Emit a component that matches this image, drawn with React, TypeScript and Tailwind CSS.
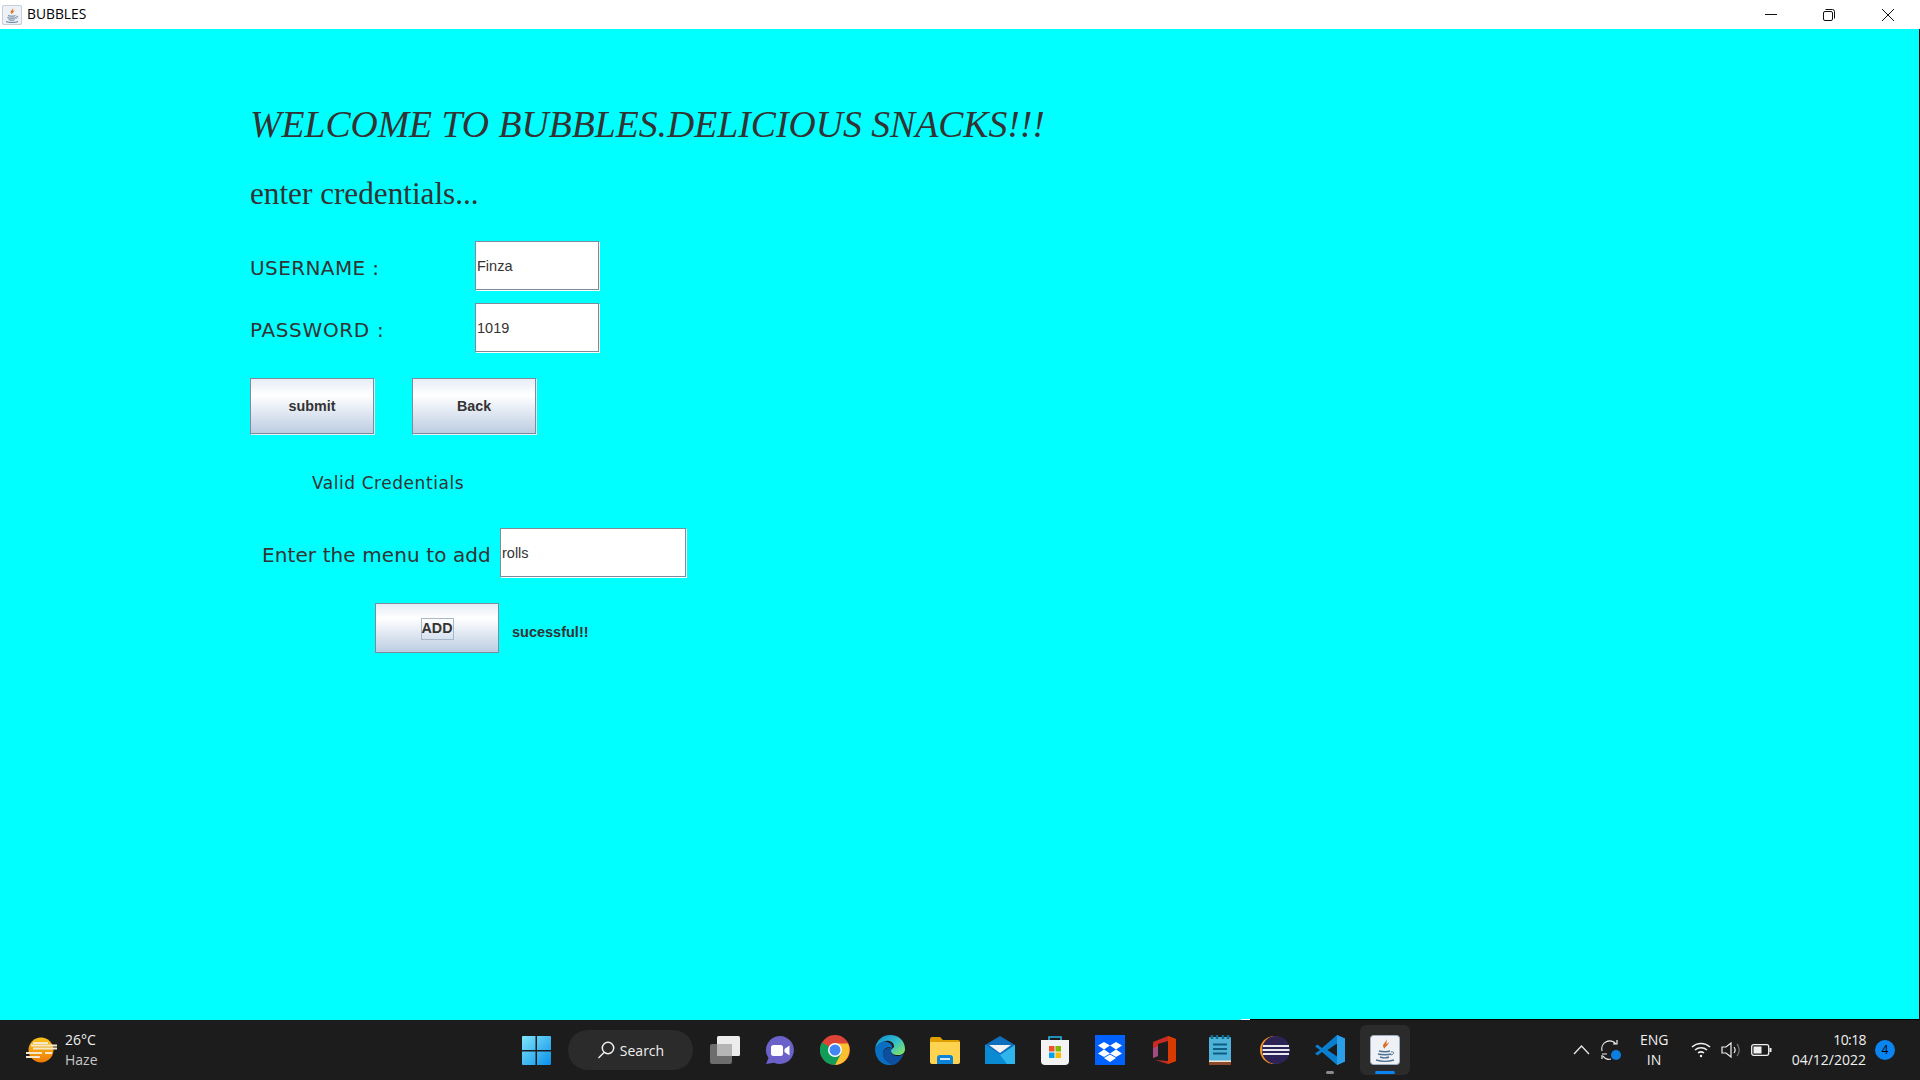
const SERIF = "font-['Liberation_Serif',serif]";
const TAHOMA = "font-['DejaVu_Sans',sans-serif]";

function JavaIcon({ size }: { size: number }) {
  return (
    <svg width={size} height={size} viewBox="0 0 30 30">
      <rect x="0.5" y="0.5" width="29" height="29" rx="3" fill="#eef1f5" stroke="#9fb0c4" />
      <path d="M16 3c2 3-3 5-3 8 0 1 1 2 2 3-1-2 4-4 4-7-1 1-2 2-3 2 1-2 1-4 0-6z" fill="#d9702a" />
      <path d="M9 16c3 1 9 1 11 0M8 19c3 1 11 1 13 0M10 22c3 1 7 1 9 0" fill="none" stroke="#4d7190" strokeWidth="1.4" />
      <path d="M21 17c3-1 4 2 0 3" fill="none" stroke="#4d7190" />
      <path d="M6 25c5 1.500 13 1.500 18 0" fill="none" stroke="#4d7190" strokeWidth="1.4" />
    </svg>
  );
}

function Win11() {
  return (
    <svg width="29" height="29" viewBox="0 0 29 29">
      <defs>
        <linearGradient id="w" x1="0" y1="0" x2="1" y2="1">
          <stop offset="0" stopColor="#7fe6fb" />
          <stop offset="1" stopColor="#0a8fe8" />
        </linearGradient>
      </defs>
      <path d="M1 0h12.500v14H0V1a1 1 0 0 1 1-1zM15 0h13a1 1 0 0 1 1 1v13H15zM0 15.500h13.500V29H1a1 1 0 0 1-1-1zM15 15.500h14V28a1 1 0 0 1-1 1H15z" fill="url(#w)" />
    </svg>
  );
}

function TaskView() {
  return (
    <svg width="30" height="28" viewBox="0 0 30 28">
      <rect x="0" y="8" width="22" height="20" rx="2" fill="#6d6d6d" />
      <rect x="7" y="0" width="23" height="20" rx="1.500" fill="#ececec" />
      <rect x="7" y="8" width="15" height="12" fill="#b5b5b5" />
    </svg>
  );
}

function Teams() {
  return (
    <svg width="30" height="30" viewBox="0 0 30 30">
      <path d="M15 1a14 14 0 1 1-6 26.700L1 29l2.500-6A14 14 0 0 1 15 1z" fill="#6a62c8" />
      <rect x="6" y="10" width="12" height="11" rx="2.500" fill="#fff" />
      <path d="M19.500 14l5-3.500v10l-5-3.500z" fill="#fff" />
    </svg>
  );
}

function Chrome() {
  return (
    <svg width="30" height="30" viewBox="0 0 30 30">
      <circle cx="15" cy="15" r="15" fill="#db4437" />
      <path d="M15 15L2 7.500A15 15 0 0 0 15 30l7.500-13z" fill="#0f9d58" />
      <path d="M15 8.500h13a15 15 0 0 1-13 21.500l7-13z" fill="#fbc02d" />
      <circle cx="15" cy="15" r="7" fill="#fff" />
      <circle cx="15" cy="15" r="5.500" fill="#4285f4" />
    </svg>
  );
}

function Edge() {
  return (
    <svg width="30" height="30" viewBox="0 0 30 30">
      <defs>
        <linearGradient id="eg" x1="0" y1="0" x2="1" y2="0.800">
          <stop offset="0" stopColor="#0a84d8" />
          <stop offset="0.600" stopColor="#35c1c8" />
          <stop offset="1" stopColor="#7ee06a" />
        </linearGradient>
      </defs>
      <path d="M15 0c9 0 15 6 15 14 0 4-3 6-7 6-5 0-7-2-7-4 0-3 3-2 3-5 0-3-4-6-8-5C5 7 1 11 0 14 1 6 7 0 15 0z" fill="url(#eg)" />
      <path d="M0 14c2-6 8-8 12-7 4 1 6 4 5 6-4-2-9 0-9 6 0 5 5 9 10 10-1 .5-2 1-4 1C6 30 0 23 0 14z" fill="#0a6fc2" />
      <path d="M8 19c0-5 5-7 9-6-1 1-1 2-1 3 0 3 3 5 7 5 3 0 5-1 6-3-2 7-8 12-11 12-5-1-10-6-10-11z" fill="#0d4f9e" />
    </svg>
  );
}

function Explorer() {
  return (
    <svg width="30" height="27" viewBox="0 0 30 27">
      <path d="M0 2a2 2 0 0 1 2-2h8l3 3h15a2 2 0 0 1 2 2v4H0z" fill="#e0a100" />
      <path d="M0 5h30v20a2 2 0 0 1-2 2H2a2 2 0 0 1-2-2z" fill="#fdd34f" />
      <path d="M7 27v-6a3 3 0 0 1 3-3h10a3 3 0 0 1 3 3v6z" fill="#0a84d8" />
      <rect x="10" y="21" width="10" height="2" fill="#fff" opacity="0.800" />
    </svg>
  );
}

function Mail() {
  return (
    <svg width="30" height="28" viewBox="0 0 30 28">
      <path d="M0 9L15 0l15 9v19H0z" fill="#0f6fbd" />
      <path d="M4 9h22L15 17z" fill="#f2f2f2" />
      <path d="M0 9l15 10L30 9v19H0z" fill="#2eb5ec" />
      <path d="M0 28V9l15 10 7 9z" fill="#0a8ad2" />
    </svg>
  );
}

function Store() {
  return (
    <svg width="30" height="30" viewBox="0 0 30 30">
      <path d="M9 6V2h12v4" fill="none" stroke="#27b5e8" strokeWidth="1.600" />
      <path d="M1 5h28v21a4 4 0 0 1-4 4H5a4 4 0 0 1-4-4z" fill="#f3f3f3" />
      <rect x="9" y="11" width="5.500" height="5.500" fill="#f0532b" />
      <rect x="15.500" y="11" width="5.500" height="5.500" fill="#7fba00" />
      <rect x="9" y="17.500" width="5.500" height="5.500" fill="#00a4ef" />
      <rect x="15.500" y="17.500" width="5.500" height="5.500" fill="#ffb900" />
    </svg>
  );
}

function Dropbox() {
  return (
    <svg width="30" height="30" viewBox="0 0 30 30">
      <rect width="30" height="30" fill="#0061fe" />
      <path d="M9 7l6 3.500-6 4-6-4zM21 7l6 3.500-6 4-6-4zM9 14.500l6 4-6 3.500-6-3.500zM21 14.500l6 4-6 3.500-6-3.500zM15 19.500l6 3.500-6 4-6-4z" fill="#fff" />
    </svg>
  );
}

function Office() {
  return (
    <svg width="24" height="28" viewBox="0 0 24 28">
      <path d="M0 6L15 0l8 3v22l-8 3-13-4 13 1V5L5 8v12L0 22z" fill="#c92a22" />
      <path d="M15 0l8 3v22l-8 3z" fill="#d83b01" />
      <path d="M0 22V12l5-2v10z" fill="#a34a7f" />
    </svg>
  );
}

function Notepad() {
  return (
    <svg width="22" height="30" viewBox="0 0 22 30">
      <rect y="2" width="22" height="28" rx="1" fill="#4fb3d9" />
      <rect y="27" width="22" height="3" fill="#8a4a2a" />
      <rect y="25.500" width="22" height="1.500" fill="#f0e6d8" />
      <path d="M3 0v4M8 0v4M14 0v4M19 0v4" stroke="#0f6f94" strokeWidth="2.500" />
      <path d="M4 9.500h14M4 14h14M4 18.500h14" stroke="#0d5f82" strokeWidth="2" />
    </svg>
  );
}

function Eclipse() {
  return (
    <svg width="30" height="30" viewBox="0 0 30 30">
      <circle cx="14" cy="15" r="14" fill="#f7941e" />
      <circle cx="16" cy="15" r="14" fill="#2c2255" />
      <path d="M3 11h26M2.500 15h27M3 19h26" stroke="#e8e8ef" strokeWidth="1.800" />
    </svg>
  );
}

function VSCode() {
  return (
    <svg width="30" height="30" viewBox="0 0 30 30">
      <path d="M22 0l8 3.500v23L22 30 7 17l-4.500 3.500L0 18.500 5 15 0 11.500 2.500 9.500 7 13z" fill="#0a7fd0" />
      <path d="M22 0l8 3.500v23L22 30z" fill="#2a9fe8" />
      <path d="M22 8.500L12.500 15 22 21.500z" fill="#1c1c1c" />
    </svg>
  );
}

function Sun() {
  return (
    <svg width="32" height="26" viewBox="0 0 32 26">
      <defs>
        <linearGradient id="s" x1="0" y1="0" x2="0" y2="1">
          <stop offset="0" stopColor="#fbc21a" />
          <stop offset="1" stopColor="#ee7a05" />
        </linearGradient>
      </defs>
      <circle cx="15" cy="13" r="12.500" fill="url(#s)" />
      <path d="M7 6h15M5 8.500h26M7 11.500h24M0 16h16M19 16h7M0 20h14" stroke="#f3e9c8" strokeWidth="2" />
    </svg>
  );
}

function Field({ value, className }: { value: string; className: string }) {
  return (
    <div className={`mb-px flex h-[49px] items-center border border-[#7d8b9b] bg-white pl-[1px] pt-[3px] font-['Liberation_Sans',sans-serif] text-[14.5px] text-[#333] shadow-[1px_1px_0_#fff] ${className}`}>
      {value}
    </div>
  );
}

function JavaButton({ children, className }: { children: React.ReactNode; className: string }) {
  return (
    <div className={`flex items-center justify-center border border-[#7d8b9b] bg-linear-to-b from-[#e6edf5] via-white via-30% to-[#bccde2] pt-[2px] font-['Liberation_Sans',sans-serif] text-[14.3px] font-bold text-[#333] ${className}`}>
      {children}
    </div>
  );
}

function Tray() {
  return (
    <div className="flex items-center text-white">
      <svg width="17" height="10" viewBox="0 0 17 10" fill="none" stroke="#e8e8e8" strokeWidth="1.300">
        <path d="M1 9l7.500-8L16 9" />
      </svg>
      <svg width="22" height="22" viewBox="0 0 22 22" fill="none" stroke="#f0f0f0" strokeWidth="1.200" className="ml-[10px]">
        <path d="M2 12a8 8 0 0 1 14-7M17 1v4h-4M2 15h5M2 20v-4" />
        <path d="M3 17c2 3 5 4 8 3" />
        <circle cx="16" cy="16" r="5" fill="#0a7fe0" stroke="none" />
      </svg>
      <div className="ml-[18px] w-[28px] text-center font-['Open_Sans',sans-serif] text-[14px] leading-[20px] text-[#f0f0f0]">
        ENG
        <br />
        IN
      </div>
      <svg width="20" height="16" viewBox="0 0 20 16" fill="none" stroke="#f0f0f0" strokeWidth="1.500" className="ml-[23px]">
        <path d="M1 5a13 13 0 0 1 18 0M4 8a9 9 0 0 1 12 0M7 11a5 5 0 0 1 6 0" />
        <circle cx="10" cy="14" r="1.200" fill="#f0f0f0" stroke="none" />
      </svg>
      <svg width="21" height="18" viewBox="0 0 21 18" fill="none" stroke="#f0f0f0" strokeWidth="1.200" className="ml-[10px]">
        <path d="M1 6h4l5-4v14l-5-4H1z" />
        <path d="M13 6c1.500 2 1.500 4 0 6" />
        <path d="M16 3c3 3.500 3 8.500 0 12" stroke="#777" />
      </svg>
      <svg width="21" height="12" viewBox="0 0 21 12" className="ml-[9px]">
        <rect x="0.700" y="0.700" width="17" height="10.600" rx="2" fill="none" stroke="#f0f0f0" strokeWidth="1.300" />
        <rect x="2.500" y="2.500" width="8" height="7" fill="#f0f0f0" />
        <rect x="18.500" y="4" width="2" height="4" fill="#f0f0f0" />
      </svg>
      <div className="ml-[18px] w-[76px] text-right font-['Open_Sans',sans-serif] text-[14px] leading-[20px] text-[#f0f0f0] whitespace-nowrap">
        <span className="tracking-[-0.6px]">10:18</span>
        <br />
        04/12/2022
      </div>
      <div className="ml-[9px] flex h-5 w-5 items-center justify-center rounded-full bg-[#0a84f0] font-['Open_Sans',sans-serif] text-[12px] text-black">
        4
      </div>
    </div>
  );
}

export default function App() {
  return (
    <div className="flex h-[1080px] w-[1920px] flex-col overflow-hidden bg-[#1c1c1c]">
      {/* title bar */}
      <div className="flex h-[29px] shrink-0 items-center bg-white">
        <div className="ml-[2px]">
          <JavaIcon size={20} />
        </div>
        <span className="ml-[5px] font-['Open_Sans',sans-serif] text-[13.8px] text-black">BUBBLES</span>
        <div className="ml-auto flex items-center">
          <svg width="12" height="12" viewBox="0 0 12 12" stroke="#111" strokeWidth="1" className="mr-[46px]">
            <path d="M0 5.500h12" />
          </svg>
          <svg width="12" height="12" viewBox="0 0 12 12" fill="none" stroke="#111" strokeWidth="1" className="mr-[47px]">
            <rect x="0.500" y="2.500" width="9" height="9" rx="1.500" />
            <path d="M2.500 .500h7a2 2 0 0 1 2 2v7" />
          </svg>
          <svg width="12" height="12" viewBox="0 0 12 12" stroke="#111" strokeWidth="1" className="mr-[26px]">
            <path d="M0 0l12 12M12 0L0 12" />
          </svg>
        </div>
      </div>

      {/* frame */}
      <div className="relative h-[991px] shrink-0 border-r border-black bg-[#00ffff] pl-[250px] pt-[77px]">
        <h1 className={`${SERIF} text-[37.7px] leading-[36px] text-[#333] italic whitespace-nowrap`}>
          WELCOME TO BUBBLES.DELICIOUS SNACKS!!!
        </h1>
        <p className={`${SERIF} mt-[34px] text-[31.2px] leading-[36px] text-[#333]`}>enter credentials...</p>

        <div className="mt-[29px] flex items-center">
          <span className={`${TAHOMA} mt-[3px] w-[225px] text-[20px] tracking-[0.4px] text-[#333]`}>USERNAME :</span>
          <Field value="Finza" className="w-[124px]" />
        </div>
        <div className="mt-[12px] flex items-center">
          <span className={`${TAHOMA} mt-[3px] w-[225px] text-[20px] tracking-[0.65px] text-[#333]`}>PASSWORD :</span>
          <Field value="1019" className="w-[124px]" />
        </div>

        <div className="mt-[25px] flex gap-[38px]">
          <JavaButton className="h-[56px] w-[124px] shadow-[1px_1px_0_#e8eef5]">submit</JavaButton>
          <JavaButton className="h-[56px] w-[124px] shadow-[1px_1px_0_#e8eef5]">Back</JavaButton>
        </div>

        <p className={`${TAHOMA} ml-[62px] mt-[37px] text-[17px] leading-[24px] tracking-[0.55px] text-[#333]`}>Valid Credentials</p>

        <div className="mt-[33px] flex items-center">
          <span className={`${TAHOMA} ml-[12px] mt-[3px] w-[238px] text-[20px] tracking-[0.1px] text-[#333] whitespace-nowrap`}>Enter the menu to add</span>
          <Field value="rolls" className="w-[186px]" />
        </div>

        <div className="mt-[25px] flex items-center">
          <JavaButton className="ml-[125px] h-[50px] w-[124px]">
            <span className="flex h-[22px] w-[33px] items-center justify-center border border-[#a9b8c9]">ADD</span>
          </JavaButton>
          <span className="ml-[13px] mt-[9px] font-['Liberation_Sans',sans-serif] text-[14.5px] font-bold text-[#333]">sucessful!!</span>
        </div>

        {/* bottom edge of the window peeking above the taskbar */}
        <div className="absolute bottom-0 left-[1241px] h-px w-[9px] bg-white" />
        <div className="absolute bottom-0 left-[1250px] right-0 h-px bg-black" />
      </div>

      {/* taskbar */}
      <div className="relative flex h-[60px] shrink-0 items-center bg-[#1c1c1c]">
        <div className="flex w-[522px] shrink-0 items-center pl-[26px]">
          <Sun />
          <div className="ml-[7px] font-['Open_Sans',sans-serif] text-[14px] leading-[20px] text-[#f0f0f0]">
            26°C
            <div className="text-[#c8c8c8]">Haze</div>
          </div>
        </div>

        <Win11 />
        <div className="ml-[17px] flex h-10 w-[125px] items-center justify-center gap-[5px] rounded-full bg-[#2b2b2b] font-['Open_Sans',sans-serif] text-[14px] text-[#f0f0f0]">
          <svg width="18" height="18" viewBox="0 0 18 18" fill="none" stroke="#f0f0f0" strokeWidth="1.500">
            <circle cx="11" cy="7" r="5.700" />
            <path d="M7 11.500L1.500 17" />
          </svg>
          Search
        </div>
        <div className="ml-[17px]">
          <TaskView />
        </div>
        <div className="ml-[25px]">
          <Teams />
        </div>
        <div className="ml-[25px]">
          <Chrome />
        </div>
        <div className="ml-[25px]">
          <Edge />
        </div>
        <div className="ml-[25px]">
          <Explorer />
        </div>
        <div className="ml-[25px]">
          <Mail />
        </div>
        <div className="ml-[25px]">
          <Store />
        </div>
        <div className="ml-[25px]">
          <Dropbox />
        </div>
        <div className="ml-[28px]">
          <Office />
        </div>
        <div className="ml-[32px]">
          <Notepad />
        </div>
        <div className="ml-[29px]">
          <Eclipse />
        </div>
        <div className="relative ml-[25px]">
          <VSCode />
          <span className="absolute -bottom-[9px] left-[11px] h-[3px] w-2 rounded-full bg-[#8a8a8a]" />
        </div>
        <div className="relative ml-[15px] flex h-[50px] w-[50px] items-center justify-center rounded-md bg-[#2b2b2b]">
          <JavaIcon size={30} />
          <span className="absolute bottom-[1px] left-[15px] h-[3px] w-5 rounded-full bg-[#0a84f0]" />
        </div>
        <div className="ml-[163px]">
          <Tray />
        </div>
      </div>
    </div>
  );
}
